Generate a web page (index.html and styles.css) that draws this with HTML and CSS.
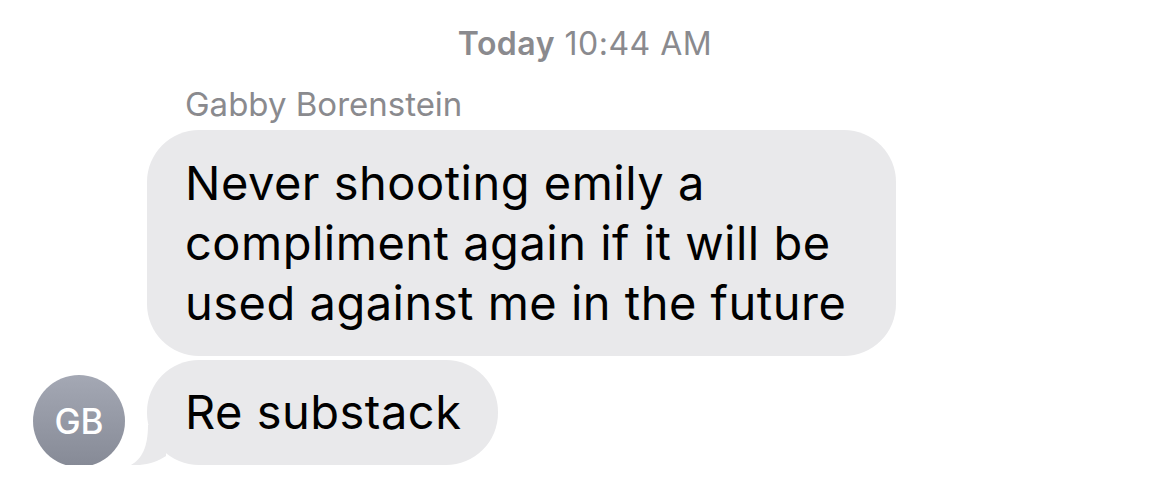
FILE: index.html
```html
<!DOCTYPE html>
<html lang="en">
<head>
  <meta charset="UTF-8" />
  <meta name="viewport" content="width=device-width, initial-scale=1.0">
  <title>Messages</title>
  <link rel="stylesheet" href="styles.css">
</head>
<body>
  <div class="chat">
    <div class="stamp"><strong>Today</strong> 10:44 AM</div>
    <div class="thread">
      <div class="avatar">GB</div>
      <div class="messages">
        <div class="sender">Gabby Borenstein</div>
        <div class="bubble">Never shooting emily a<br>compliment again if it will be<br>used against me in the future</div>
        <div class="bubble last">
          Re substack
          <svg class="tail" width="36" height="40" viewBox="0 0 36 40">
            <path d="M18 0 C18 22 12 34 1 40 C12 41 26 38 36 31 L36 0 Z" fill="#e9e9eb"/>
          </svg>
        </div>
      </div>
    </div>
  </div>
</body>
</html>
```

FILE: styles.css
```css
body {
  margin: 0;
  background: #fff;
  font-family: Inter, 'Liberation Sans', sans-serif;
  color: #000;
}
.chat {
  padding-top: 24px;
}
.stamp {
  text-align: center;
  font-size: 32px;
  line-height: 40px;
  letter-spacing: 0.5px;
  color: #8a8a8e;
}
.stamp strong {
  font-weight: 600;
}
.thread {
  display: flex;
  align-items: flex-end;
  gap: 22px;
  padding-left: 33px;
  margin-top: 20px;
}
.avatar {
  flex: none;
  width: 92px;
  height: 92px;
  border-radius: 50%;
  background: linear-gradient(#a4a8b4, #868a96);
  color: #fff;
  font-size: 35px;
  font-weight: 500;
  display: flex;
  align-items: center;
  justify-content: center;
  margin-bottom: -2px;
  position: relative;
  z-index: 1;
}
.messages {
  display: flex;
  flex-direction: column;
  align-items: flex-start;
  gap: 4px;
}
.sender {
  padding-left: 38px;
  font-size: 33px;
  line-height: 40px;
  color: #8a8a8e;
  margin-bottom: 2px;
}
.bubble {
  position: relative;
  background: #e9e9eb;
  border-radius: 52px;
  padding: 23px 50px 23px 38px;
  font-size: 47px;
  line-height: 60px;
  letter-spacing: 0.5px;
}
.bubble.last {
  padding: 22px 36px 23px 38px;
}
.tail {
  position: absolute;
  left: -17px;
  bottom: 0;
}
```
